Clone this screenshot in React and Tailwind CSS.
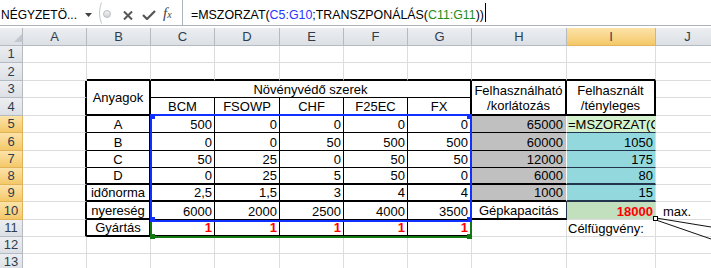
import { Fragment } from 'react'

const COLS = ['A', 'B', 'C', 'D', 'E', 'F', 'G', 'H', 'I', 'J']

// cell edge styles: g = sheet gridline, t = thin black, T = thick black, w = white, n/N = dark navy
const RIGHT = {
  g: 'border-r border-r-[#dadcdd]',
  t: 'border-r border-r-black',
  T: 'border-r-2 border-r-black',
  w: 'border-r border-r-white',
  n: 'border-r border-r-[#22354d]',
}
const BOTTOM = {
  g: 'border-b border-b-[#dadcdd]',
  t: 'border-b border-b-black',
  T: 'border-b-2 border-b-black',
  n: 'border-b border-b-[#22354d]',
  N: 'border-b-2 border-b-[#22354d]',
}
const VALIGN = { end: 'items-end', center: 'items-center' }

const DATA = [
  { n: 5, label: 'A', vals: ['500', '0', '0', '0', '0'], h: '65000', i: null, b: 't', ib: 'n' },
  { n: 6, label: 'B', vals: ['0', '0', '50', '500', '500'], h: '60000', i: '1050', b: 't', ib: 'n' },
  { n: 7, label: 'C', vals: ['50', '25', '0', '50', '50'], h: '12000', i: '175', b: 't', ib: 'n' },
  { n: 8, label: 'D', vals: ['0', '25', '5', '50', '0'], h: '6000', i: '80', b: 'T', ib: 'N' },
  { n: 9, label: 'időnorma', vals: ['2,5', '1,5', '3', '4', '4'], h: '1000', i: '15', b: 'T', ib: 'N' },
]

const PROFIT = ['6000', '2000', '2500', '4000', '3500']
const PRODUCTS = ['BCM', 'FSOWP', 'CHF', 'F25EC', 'FX']

function Cell({ r = 'g', b = 'g', v = 'end', className = '', children }) {
  return (
    <div className={`flex overflow-hidden whitespace-nowrap leading-[15px] ${VALIGN[v]} ${RIGHT[r]} ${BOTTOM[b]} ${className}`}>
      {children}
    </div>
  )
}

function ColHead({ children, active }) {
  const tone = active
    ? 'bg-linear-to-b from-[#fce3a9] to-[#f4c867] border-r-[#e2b459] border-b-[#e2b459]'
    : 'bg-linear-to-b from-[#eceef1] to-[#dce0e5] border-r-[#b5bbc3] border-b-[#b5bbc3]'
  return (
    <div className={`flex items-center justify-center border-r border-b text-[13px] text-[#2e3d4e] ${tone}`}>
      {children}
    </div>
  )
}

function RowHead({ n, active }) {
  return <ColHead active={active}>{n}</ColHead>
}

function BlankRow({ n }) {
  return (
    <>
      <RowHead n={n} />
      {COLS.map(c => <Cell key={c} />)}
    </>
  )
}

function FormulaBar() {
  return (
    <div className="flex h-[26px] items-start border-b border-b-[#aab2bc] bg-white">
      <div className="w-[84px] pl-[1px] pt-[8px] text-[12px] leading-[14px]">NÉGYZETÖ...</div>
      <div className="w-[13px] pl-[1px] pt-[13px]">
        <svg width="7" height="4" viewBox="0 0 7 4"><path d="M0 0h7L3.5 4z" fill="#444" /></svg>
      </div>
      <svg className="mt-[2px]" width="5" height="22" viewBox="0 0 5 22">
        <path d="M4.5 0.5Q0.5 11 4.5 21.5" fill="none" stroke="#c2c6cc" />
      </svg>
      <div className="ml-[1px] mt-[10px] h-[8px] w-[8px] rounded-full border border-[#b9bdc2] bg-linear-to-b from-[#f2f2f2] to-[#cfd2d6]" />
      <svg className="ml-[12px] mt-[11px]" width="10" height="9" viewBox="0 0 10 9">
        <path d="M1 0.5L9 8.5M9 0.5L1 8.5" stroke="#555" strokeWidth="2" />
      </svg>
      <svg className="ml-[9px] mt-[10px]" width="14" height="10" viewBox="0 0 14 10">
        <path d="M1 5L5 9L13 1" fill="none" stroke="#555" strokeWidth="2.2" />
      </svg>
      <div className="ml-[7px] w-[19px] pt-[5px] font-['Liberation_Serif',serif] text-[15px] italic leading-[16px] text-[#444]">
        f<span className="text-[10px]">x</span>
      </div>
      <div className="flex h-full flex-1 items-start border-l border-l-[#aab2bc] pl-[8px]">
        <span className="pt-[8px] text-[12.4px] leading-[14px]">
          =MSZORZAT(<span className="text-[#2a35ff]">C5:G10</span>;TRANSZPONÁLÁS(<span className="text-[#1a8f1a]">C11:G11</span>))
        </span>
        <div className="ml-[1px] mt-[3px] h-[19px] w-px bg-black" />
      </div>
    </div>
  )
}

export default function App() {
  return (
    <div className="relative h-[268px] w-[711px] overflow-hidden bg-white font-['Liberation_Sans',Arial,sans-serif] text-black">
      <FormulaBar />
      <div className="h-[2px]" />
      <div className="relative grid grid-cols-[23px_64px_64px_64px_65px_64px_64px_64px_95px_89px_64px] grid-rows-[18px_17px_18px_17px_18px_17px_18px_17px_17px_17px_18px_17px_17px_17px] text-[13px]">
        {/* column headers */}
        <div className="flex items-end justify-end border-r border-b border-r-[#b5bbc3] border-b-[#b5bbc3] bg-linear-to-b from-[#eceef1] to-[#dce0e5] pb-[3px]">
          <svg width="8" height="8" viewBox="0 0 8 8"><path d="M8 0V8H0z" fill="#c3c8ce" /></svg>
        </div>
        {COLS.map(c => <ColHead key={c} active={c === 'I'}>{c}</ColHead>)}

        <BlankRow n={1} />

        <RowHead n={2} />
        <Cell />
        {COLS.slice(1, 9).map(c => <Cell key={c} b="T" />)}
        <Cell />

        {/* table head */}
        <RowHead n={3} />
        <Cell r="T" />
        <Cell r="T" b="T" v="center" className="row-span-2 justify-center">Anyagok</Cell>
        <Cell r="T" b="t" className="col-span-5 justify-center">Növényvédő szerek</Cell>
        <Cell r="T" b="T" className="row-span-2 justify-center pb-[1px]">
          <div className="text-center">Felhasználható<br />/korlátozás</div>
        </Cell>
        <Cell r="T" b="T" className="row-span-2 justify-center pb-[1px]">
          <div className="text-center">Felhasznált<br />/tényleges</div>
        </Cell>
        <Cell />

        <RowHead n={4} />
        <Cell r="T" />
        {PRODUCTS.map((p, k) => (
          <Cell key={p} r={k === 4 ? 'T' : 't'} b="T" className="justify-center">{p}</Cell>
        ))}
        <Cell />

        {/* coefficient rows */}
        {DATA.map(row => (
          <Fragment key={row.n}>
            <RowHead n={row.n} active />
            <Cell r="T" />
            <Cell r="T" b={row.b} className="justify-center">{row.label}</Cell>
            {row.vals.map((v, k) => (
              <Cell key={k} r={k === 4 ? 'T' : 't'} b={row.b} className="justify-end pr-[2px]">{v}</Cell>
            ))}
            <Cell r="w" b={row.b} className="justify-end bg-[#c0c0c0] pr-[3px]">{row.h}</Cell>
            {row.i === null ? (
              <Cell b={row.ib} className="bg-[#d3f1cc] pl-[1px]">=MSZORZAT(C</Cell>
            ) : (
              <Cell b={row.ib} className="justify-end bg-[#93d8dc] pr-[2px]">{row.i}</Cell>
            )}
            <Cell />
          </Fragment>
        ))}

        <RowHead n={10} active />
        <Cell r="T" />
        <Cell r="T" b="T" className="justify-center">nyereség</Cell>
        {PROFIT.map((v, k) => (
          <Cell key={k} r={k === 4 ? 'T' : 't'} b="t" className="justify-end pr-[2px]">{v}</Cell>
        ))}
        <Cell r="n" b="T" className="pl-[7px]">Gépkapacitás</Cell>
        <Cell className="justify-end bg-[#c2dfbe] pr-[2px] font-bold text-[#ff0000]">18000</Cell>
        <Cell className="pl-[7px]">max.</Cell>

        <RowHead n={11} />
        <Cell r="T" />
        <Cell r="T" b="T" className="justify-center">Gyártás</Cell>
        {PRODUCTS.map((p, k) => (
          <Cell key={p} r={k === 4 ? 'T' : 't'} b="T" className="justify-end pr-[2px] font-bold text-[#ff0000]">1</Cell>
        ))}
        <Cell />
        <Cell className="pl-[1px]">Célfüggvény:</Cell>
        <Cell />

        <BlankRow n={12} />
        <BlankRow n={13} />

        {/* formula reference highlights */}
        <div className="pointer-events-none absolute col-start-4 col-end-9 row-start-12 row-end-13 top-0 -bottom-px -left-px right-0 border-x-2 border-b-2 border-[#107a10]">
          <div className="absolute -bottom-[3px] -left-[2px] h-[5px] w-[5px] bg-[#107a10]" />
          <div className="absolute -bottom-[3px] -right-[2px] h-[5px] w-[5px] bg-[#107a10]" />
        </div>
        <div className="pointer-events-none absolute col-start-4 col-end-9 row-start-6 row-end-12 -top-[2px] -bottom-[2px] -left-px right-0 border-2 border-[#1030ff]">
          <div className="absolute -left-[2px] -top-[2px] h-[5px] w-[5px] bg-[#1030ff]" />
          <div className="absolute -right-[2px] -top-[2px] h-[5px] w-[5px] bg-[#1030ff]" />
          <div className="absolute -bottom-[2px] -left-[2px] h-[5px] w-[5px] bg-[#1030ff]" />
          <div className="absolute -bottom-[2px] -right-[2px] h-[5px] w-[5px] bg-[#1030ff]" />
        </div>
      </div>

      {/* callout leader lines */}
      <svg className="pointer-events-none absolute left-[650px] top-[212px]" width="61" height="30" viewBox="0 0 61 30">
        <path d="M6 6L61 15M6 8L61 27" stroke="#111" strokeWidth="1" fill="none" />
        <rect x="3.5" y="4.5" width="4" height="4" fill="#fff" stroke="#000" />
      </svg>
    </div>
  )
}
